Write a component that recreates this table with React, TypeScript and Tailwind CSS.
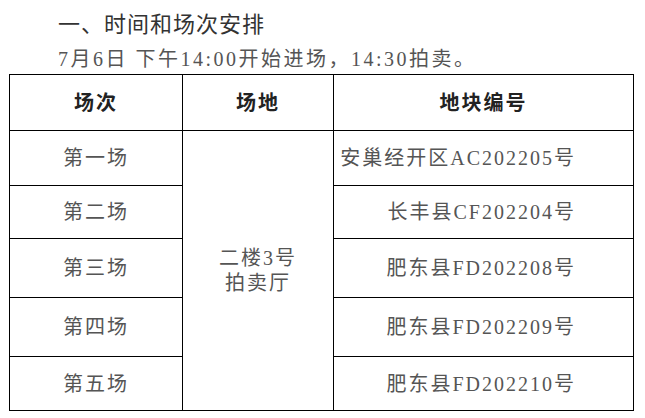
import React from "react";

const serif = {
  fontFamily: '"Liberation Serif", "Noto Sans CJK SC", serif',
};

const rows = [
  { name: "第一场", lot: "安巢经开区AC202205号", h: "h-[55px]" },
  { name: "第二场", lot: "长丰县CF202204号", h: "h-[53px]" },
  { name: "第三场", lot: "肥东县FD202208号", h: "h-[59px]" },
  { name: "第四场", lot: "肥东县FD202209号", h: "h-[59px]" },
  { name: "第五场", lot: "肥东县FD202210号", h: "h-[54px]" },
];

export default function App() {
  return (
    <div className="w-[645px] h-[418px] bg-white overflow-hidden">
      <div
        className="h-[42px] pt-[8px] pl-[58px] text-[22px] leading-[28px] tracking-[1px] text-[#333]"
        style={{ fontFamily: '"Noto Sans CJK SC", sans-serif' }}
      >
        一、时间和场次安排
      </div>
      <div
        className="h-[32px] pt-[4px] pl-[58px] text-[20px] leading-[26px] tracking-[2.5px] text-[#555]"
        style={serif}
      >
        7月6日 下午14:00开始进场，14:30拍卖。
      </div>
      <table
        className="ml-[9px] w-[624px] table-fixed border-collapse text-[20px] tracking-[2px] text-[#555]"
        style={serif}
      >
        <colgroup>
          <col className="w-[173px]" />
          <col className="w-[151px]" />
          <col className="w-[300px]" />
        </colgroup>
        <tbody>
          <tr className="h-[56px]">
            <th className="border border-black text-center font-bold text-[#222] p-0">
              场次
            </th>
            <th className="border border-black text-center font-bold text-[#222] p-0">
              场地
            </th>
            <th className="border border-black text-center font-bold text-[#222] p-0">
              地块编号
            </th>
          </tr>
          {rows.map((r, i) => (
            <tr key={r.name} className={r.h}>
              <td className="border border-black text-center p-0">{r.name}</td>
              {i === 0 && (
                <td
                  rowSpan={5}
                  className="border border-black text-center p-0 leading-[25px]"
                >
                  <div>二楼3号</div>
                  <div>拍卖厅</div>
                </td>
              )}
              <td className="border border-black text-right pr-[57px] p-0">
                {r.lot}
              </td>
            </tr>
          ))}
        </tbody>
      </table>
    </div>
  );
}
